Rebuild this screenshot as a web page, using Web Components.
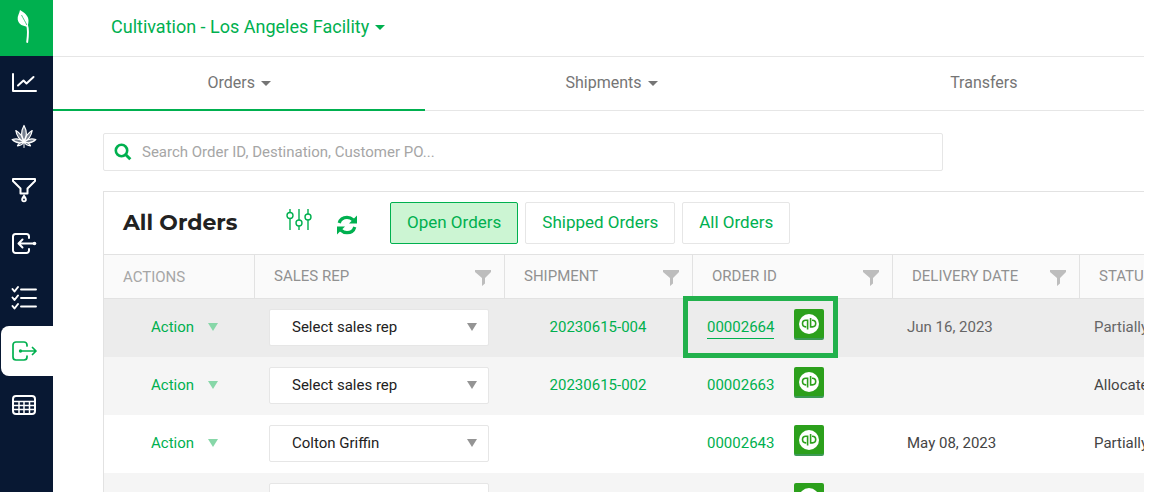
<!DOCTYPE html>
<html lang="en">
<head>
<meta charset="utf-8">
<title>Orders</title>
<style>
  body { margin: 0; font-family: Roboto, "Liberation Sans", sans-serif; background: #fff; color: #444; }
</style>
</head>
<body>
<orders-app></orders-app>

<script>
const GREEN = '#00b04f';

function define(name, html, setup) {
  const template = document.createElement('template');
  template.innerHTML = html;
  customElements.define(name, class extends HTMLElement {
    connectedCallback() {
      if (this.shadowRoot) return;
      this.attachShadow({ mode: 'open' }).append(template.content.cloneNode(true));
      if (setup) setup(this, this.shadowRoot);
    }
  });
}

/* Icons: [width, height, markup] */
const line = 'fill="none" stroke="currentColor" stroke-linecap="round" stroke-linejoin="round"';
const ICONS = {
  leaf: [16, 36, `<path fill="currentColor" d="M4 1C8 3.500 12.500 6.500 12.500 11.500C12.500 14 12 16 11.500 17.500C7.500 17.500 2.500 15.500 1.700 10.500C1.200 7 3.500 4.500 4 1Z"/><path ${line} stroke-width="1.900" d="M11 16C12.400 20 12 27 11.200 33"/><path fill="none" stroke="${GREEN}" stroke-width=".7" d="M5.500 6C7.500 10 9.500 13 10.800 16"/>`],
  chart: [26, 22, `<path ${line} stroke-width="2" d="M2 3V20H25M7 14.500L12.500 9.500L15.500 12.500L22.500 6"/>`],
  hemp: [26, 26, `<g fill="currentColor" fill-opacity=".45" stroke="currentColor" stroke-width="1.200" stroke-linejoin="round"><path d="M13 19C9.500 13 10.500 7 13 2.500C15.500 7 16.500 13 13 19Z"/><path d="M13 19C8 16.500 5.500 12 4.800 7.500C9 10 12 13.500 13 19Z"/><path d="M13 19C18 16.500 20.500 12 21.200 7.500C17 10 14 13.500 13 19Z"/><path d="M13 19C8.500 20.500 4 19.500 1.200 16.500C5 15.300 9.500 16 13 19Z"/><path d="M13 19C17.500 20.500 22 19.500 24.800 16.500C21 15.300 16.500 16 13 19Z"/><path d="M13 19C11.500 21.500 9 22.800 6.500 22.800C7.500 20.500 10 19 13 19Z"/><path d="M13 19C14.500 21.500 17 22.800 19.500 22.800C18.500 20.500 16 19 13 19Z"/></g><path ${line} stroke-width="1" d="M13 19V24.500"/>`],
  drip: [26, 26, `<path ${line} stroke-width="2" d="M2 2H24V4L16.500 11.500V16.500H9.500V11.500L2 4Z"/><path fill="currentColor" d="M13 17C14.500 19.500 15.800 20.800 15.800 22.500A2.800 2.800 0 0 1 10.200 22.500C10.200 20.800 11.500 19.500 13 17Z"/><circle cx="13" cy="22.500" r=".9" fill="#081833"/>`],
  inbound: [26, 24, `<path ${line} stroke-width="2" d="M18 6V4.500A2.500 2.500 0 0 0 15.500 2H4.500A2.500 2.500 0 0 0 2 4.500V18.500A2.500 2.500 0 0 0 4.500 21H15.500A2.500 2.500 0 0 0 18 18.500V17M8 11.500H23M11.500 7.500L7.500 11.500L11.500 15.500"/><circle cx="23.500" cy="11.500" r="1.800" fill="currentColor"/>`],
  outbound: [26, 24, `<path ${line} stroke-width="1.700" d="M16 7V6A3 3 0 0 0 13 3H5A3 3 0 0 0 2 6V18A3 3 0 0 0 5 21H13A3 3 0 0 0 16 18V17M9.500 12H25M21.500 8.500L25 12L21.500 15.500"/><circle cx="9.500" cy="12" r="1.700" fill="currentColor"/>`],
  checks: [26, 26, `<path ${line} stroke-width="1.900" d="M10 4.500H25M10 13H25M10 21.500H25"/><path ${line} stroke-width="2" d="M1.500 4L3.500 6.500L7 2M1.500 12.500L3.500 15L7 10.500M1.500 21L3.500 23.500L7 19"/>`],
  table: [26, 22, `<rect x="2" y="1" width="22" height="18" rx="3" ${line} stroke-width="2"/><path fill="none" stroke="currentColor" stroke-width="1.500" d="M2 6.500H24M2 10.500H24M2 14.500H24M8 6V19M13 6V19M18.500 6V19"/>`],
  search: [18, 18, `<circle cx="7.500" cy="7.500" r="5.700" fill="none" stroke="currentColor" stroke-width="2.600"/><path d="M11.800 11.800L16.300 16.300" stroke="currentColor" stroke-width="3"/>`],
  sliders: [26, 30, `<g fill="none" stroke="currentColor" stroke-width="1.400"><path d="M4 1V4.500M4 10.500V22M13 1V12M13 18V22M22 1V6M22 12V22"/><circle cx="4" cy="7.500" r="3"/><circle cx="13" cy="15" r="3"/><circle cx="22" cy="9" r="3"/></g>`],
  refresh: [22, 20, `<g transform="translate(1 -1)"><path fill="none" stroke="currentColor" stroke-width="3.200" d="M2.200 9C3.200 5.500 6 3.300 10 3.300C12.500 3.300 14.500 4.300 16.300 6M17.800 13C16.800 16.500 14 18.700 10 18.700C7.500 18.700 5.500 17.700 3.700 16"/><path fill="currentColor" d="M20 1.500V9.500H12ZM0 20.500V12.500H8Z"/></g>`],
  funnel: [16, 16, `<path fill="currentColor" d="M0 0H16V2L10 8V13.500L7 16V8L0 2Z"/>`],
  caret: [10, 5, `<path fill="currentColor" d="M0 0H10L5 5Z"/>`],
  triangle: [10, 8, `<path fill="currentColor" d="M0 0H10L5 8Z"/>`],
  quickbooks: [30, 31, `<rect y="2" width="30" height="29" rx="2" fill="#3c9a55"/><rect width="30" height="29" rx="2" fill="#2ca01c"/><circle cx="15" cy="15" r="10" fill="#fff"/><g fill="none" stroke="#2ca01c" stroke-width="1.600"><path d="M13.600 20.500V11.300H11.800A3.300 3.300 0 0 0 11.800 17.900H12.200"/><path d="M16.600 9V17.900H18.400A3.300 3.300 0 0 0 18.400 11.300H18"/></g>`],
};

define('app-icon', `<style>:host { display: inline-flex; flex: none; } svg { display: block; }</style>`, (host, root) => {
  const [w, h, art] = ICONS[host.getAttribute('name')];
  root.innerHTML += `<svg width="${w}" height="${h}" viewBox="0 0 ${w} ${h}" aria-hidden="true">${art}</svg>`;
});

define('side-bar', `
<style>
  :host { display: flex; flex-direction: column; width: 53px; background: #081833; color: #fff; }
  a { box-sizing: border-box; color: inherit; display: flex; align-items: center; justify-content: center; }
  .logo { height: 56px; padding: 0 5px 2px 0; background: ${GREEN}; }
  nav { display: grid; gap: 4px; }
  nav a { height: 50px; margin-left: 1px; padding: 2px 6px 0 0; }
  nav a[aria-current] { padding-top: 0; background: #fff; color: ${GREEN}; border-radius: 8px 0 0 8px; }
</style>
<a class="logo" href="#" aria-label="Home"><app-icon name="leaf"></app-icon></a>
<nav>
  <a href="#" aria-label="Analytics"><app-icon name="chart"></app-icon></a>
  <a href="#" aria-label="Plants"><app-icon name="hemp"></app-icon></a>
  <a href="#" aria-label="Extraction"><app-icon name="drip"></app-icon></a>
  <a href="#" aria-label="Inbound"><app-icon name="inbound"></app-icon></a>
  <a href="#" aria-label="Tasks"><app-icon name="checks"></app-icon></a>
  <a href="#" aria-label="Outbound" aria-current="page"><app-icon name="outbound"></app-icon></a>
  <a href="#" aria-label="Reports"><app-icon name="table"></app-icon></a>
</nav>`);

define('facility-bar', `
<style>
  :host { display: flex; align-items: center; height: 56px; padding-left: 58px; border-bottom: 1px solid #e6e6e6; }
  button { display: flex; align-items: center; gap: 6px; font: 18px/24px Roboto, sans-serif; color: ${GREEN}; border: 0; padding: 0 0 2px; background: none; }
</style>
<button type="button"><slot></slot><app-icon name="caret"></app-icon></button>`);

define('nav-tab', `
<style>
  :host { display: grid; }
  a { display: flex; align-items: center; justify-content: center; gap: 6px; height: 52px; font-size: 16px; line-height: 20px; color: #757575; text-decoration: none; border-bottom: 2px solid transparent; }
  :host([active]) a { border-color: ${GREEN}; }
  :host([plain]) app-icon { display: none; }
</style>
<a href="#"><slot></slot><app-icon name="caret"></app-icon></a>`);

define('tab-bar', `
<style>
  :host { display: block; overflow: hidden; box-shadow: inset 0 -1px #e6e6e6; }
  nav { display: grid; grid-template-columns: repeat(3, 1fr); margin-right: -26px; }
</style>
<nav><slot></slot></nav>`);

define('search-box', `
<style>
  :host { display: block; max-width: 840px; }
  label { display: flex; align-items: center; gap: 10px; box-sizing: border-box; height: 38px; padding: 0 10px; border: 1px solid #e6e6e6; border-radius: 2px; color: ${GREEN}; }
  input { flex: 1; border: 0; outline: 0; padding: 0; font: 15px/20px Roboto, sans-serif; color: #444; background: none; }
  input::placeholder { color: #a6a6a6; }
</style>
<label><app-icon name="search"></app-icon><input type="search" aria-label="Search orders" placeholder="Search Order ID, Destination, Customer PO..."></label>`);

define('filter-button', `
<style>
  :host { display: inline-flex; }
  button { height: 42px; padding: 0 16px 2px; font: 17px/24px Roboto, sans-serif; color: ${GREEN}; background: #fff; border: 1px solid #e6e6e6; border-radius: 2px; }
  :host([pressed]) button { background: #ccf5d3; border-color: ${GREEN}; }
</style>
<button type="button"><slot></slot></button>`);

define('rep-select', `
<style>
  :host { display: grid; align-items: center; width: 220px; }
  select, app-icon { grid-area: 1 / 1; }
  select { appearance: none; width: 100%; height: 37px; padding: 0 22px 2px; font: 15px/20px Roboto, sans-serif; color: #222; background: #fff; border: 1px solid #e6e6e6; border-radius: 2px; }
  app-icon { justify-self: end; margin: 0 12px 2px 0; color: #949494; pointer-events: none; }
</style>
<select aria-label="Sales rep"></select><app-icon name="triangle"></app-icon>`, (host, root) => {
  root.querySelector('select').add(new Option(host.getAttribute('value')));
});

const ORDERS = [
  { rep: 'Select sales rep', shipment: '20230615-004', id: '00002664', date: 'Jun 16, 2023', status: 'Partially', current: true },
  { rep: 'Select sales rep', shipment: '20230615-002', id: '00002663', date: '', status: 'Allocated' },
  { rep: 'Colton Griffin', shipment: '', id: '00002643', date: 'May 08, 2023', status: 'Partially' },
  { rep: 'Select sales rep', shipment: '', id: '', date: '', status: '' },
];

define('orders-table', `
<style>
  :host { display: block; overflow: hidden; }
  table { table-layout: fixed; width: 1164px; border-collapse: separate; border-spacing: 0; font-size: 15px; line-height: 20px; }
  th { height: 41px; padding: 0 13px 2px 19px; font-weight: 400; text-align: left; color: #919191; background: #fafafa; border: solid #e2e2e2; border-width: 1px 1px 1px 0; }
  th:first-child { color: #a6a6a6; padding-top: 1px; padding-bottom: 1px; }
  th div { display: flex; align-items: center; justify-content: space-between; }
  th:last-child app-icon { visibility: hidden; }
  th app-icon { color: #bdbdbd; padding-top: 4px; }
  td { height: 48px; padding: 10px 14px 0; vertical-align: top; line-height: 36px; }
  tr:nth-child(even) td { background: #f5f5f5; }
  tr.current td { background: #ececec; color: #666; }
  a, button { color: ${GREEN}; text-decoration: none; }
  button { display: flex; align-items: center; gap: 14px; margin-left: 33px; padding: 0; font: 15px/36px Roboto, sans-serif; border: 0; background: none; }
  button app-icon { color: #87d7a8; }
  td.shipment { text-align: center; padding-right: 16px; }
  .order { position: relative; }
  .order div { display: flex; align-items: flex-start; }
  .order a { width: 87px; }
  .current .order span { display: inline-block; line-height: 20px; padding: 8px 0 1px; border-bottom: 1px solid ${GREEN}; }
  .highlight { position: absolute; z-index: 1; inset: -3px 55px -1px -10px; border: 5px solid #22b14c; }
</style>
<table>
  <colgroup><col style="width:151px"><col style="width:250px"><col style="width:188px"><col style="width:200px"><col style="width:187px"><col style="width:188px"></colgroup>
  <thead><tr></tr></thead>
  <tbody></tbody>
</table>`, (host, root) => {
  root.querySelector('thead tr').innerHTML = ['ACTIONS', 'SALES REP', 'SHIPMENT', 'ORDER ID', 'DELIVERY DATE', 'STATUS']
    .map((t, i) => `<th scope="col"><div>${t}${i ? '<app-icon name="funnel"></app-icon>' : ''}</div></th>`).join('');
  root.querySelector('tbody').innerHTML = ORDERS.map(o => `
    <tr class="${o.current ? 'current' : ''}">
      <td><button type="button">Action<app-icon name="triangle"></app-icon></button></td>
      <td><rep-select value="${o.rep}"></rep-select></td>
      <td class="shipment"><a href="#">${o.shipment}</a></td>
      <td class="order"><div><a href="#"><span>${o.id}</span></a><app-icon name="quickbooks"></app-icon></div>${o.current ? '<i class="highlight"></i>' : ''}</td>
      <td>${o.date}</td>
      <td>${o.status}</td>
    </tr>`).join('');
});

define('orders-card', `
<style>
  :host { display: block; border: solid #e2e2e2; border-width: 1px 0 0 1px; }
  header { display: flex; align-items: center; height: 62px; padding-left: 19px; }
  h2 { margin: 0; flex: 0 0 163px; font: 700 22px/32px Montserrat, Inter, sans-serif; color: #222; }
  .tool { display: flex; border: 0; padding: 0; background: none; color: ${GREEN}; }
  .refresh { margin: 4px 32px 0 24px; }
  .filters { display: flex; gap: 7px; }
</style>
<header>
  <h2>All Orders</h2>
  <button class="tool" type="button" aria-label="Settings"><app-icon name="sliders"></app-icon></button>
  <button class="tool refresh" type="button" aria-label="Refresh"><app-icon name="refresh"></app-icon></button>
  <div class="filters">
    <filter-button pressed>Open Orders</filter-button>
    <filter-button>Shipped Orders</filter-button>
    <filter-button>All Orders</filter-button>
  </div>
</header>
<orders-table></orders-table>`);

define('orders-app', `
<style>
  :host { display: grid; grid-template-columns: auto minmax(0, 1fr); height: 100vh; overflow: hidden; padding-right: 6px; box-sizing: border-box; }
  main { min-width: 0; }
  section { display: grid; grid-template-columns: minmax(0, 1fr); gap: 20px; padding: 22px 0 0 50px; }
</style>
<side-bar></side-bar>
<main>
  <facility-bar>Cultivation - Los Angeles Facility</facility-bar>
  <tab-bar>
    <nav-tab active>Orders</nav-tab>
    <nav-tab>Shipments</nav-tab>
    <nav-tab plain>Transfers</nav-tab>
  </tab-bar>
  <section>
    <search-box></search-box>
    <orders-card></orders-card>
  </section>
</main>`);
</script>
</body>
</html>
